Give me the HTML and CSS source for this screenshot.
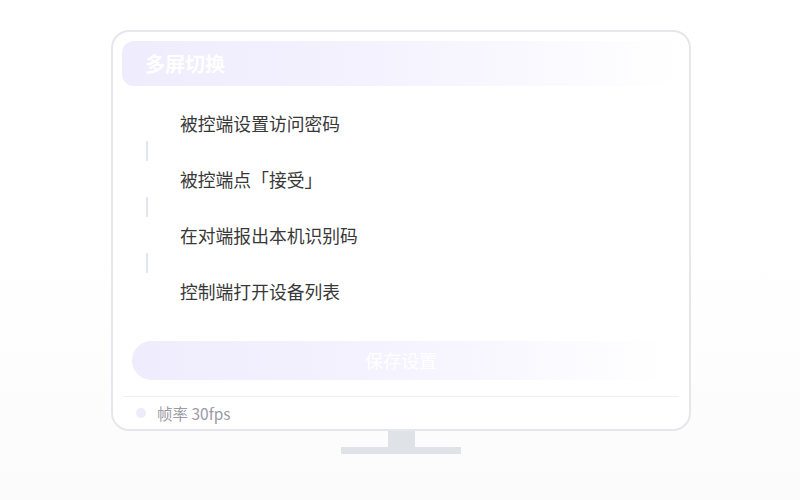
FILE: index.html
```html
<!DOCTYPE html>
<html lang="zh">
<head>
<meta charset="utf-8">
<link rel="stylesheet" href="styles.css">
</head>
<body>
<div class="monitor">
  <div class="screen">
    <div class="title">多屏切换</div>
    <div class="steps">
      <div class="step">被控端设置访问密码</div>
      <div class="connector"><span class="line"></span></div>
      <div class="step">被控端点「接受」</div>
      <div class="connector"><span class="line"></span></div>
      <div class="step">在对端报出本机识别码</div>
      <div class="connector"><span class="line"></span></div>
      <div class="step">控制端打开设备列表</div>
    </div>
    <div class="save">保存设置</div>
    <div class="divider"></div>
    <div class="footer"><span class="dot"></span><span class="fps">帧率 30fps</span></div>
  </div>
  <div class="neck"></div>
  <div class="base"></div>
</div>
</body>
</html>
```
FILE: styles.css
```css
html, body {
  margin: 0;
  padding: 0;
}
body {
  width: 800px;
  height: 500px;
  background: linear-gradient(180deg, #ffffff 0%, #ffffff 50%, #fbfbfc 100%);
  font-family: "Noto Sans CJK SC", "Noto Sans", sans-serif;
  overflow: hidden;
}
.monitor {
  display: flex;
  flex-direction: column;
  align-items: center;
  width: 580px;
  padding-top: 30px;
  margin-left: 111px;
}
.screen {
  box-sizing: border-box;
  width: 580px;
  height: 401px;
  border: 2px solid #e6e7ec;
  border-radius: 18px;
  background: #ffffff;
  display: flex;
  flex-direction: column;
}
.title {
  margin: 9px 9px 0 9px;
  height: 45px;
  border-radius: 12px;
  background: linear-gradient(90deg, #efecfd 0%, #f4f2fe 45%, rgba(255,255,255,0) 100%);
  color: #ffffff;
  font-size: 20px;
  font-weight: 700;
  line-height: 46px;
  padding-left: 23px;
}
.steps {
  margin-top: 23px;
  display: flex;
  flex-direction: column;
}
.step {
  height: 28px;
  line-height: 28px;
  font-size: 17.8px;
  color: #383838;
  padding-left: 67px;
}
.connector {
  height: 28px;
  display: flex;
  align-items: center;
  padding-left: 33px;
}
.line {
  width: 2px;
  height: 20px;
  background: #e4e6ee;
}
.save {
  margin: 36px 19px 0 19px;
  height: 39px;
  border-radius: 20px;
  background: linear-gradient(90deg, #efecfd 0%, #f5f3fe 50%, rgba(255,255,255,0) 100%);
  color: #ffffff;
  font-size: 18px;
  line-height: 39px;
  text-align: center;
}
.divider {
  margin: 16px 10px 0 10px;
  height: 1px;
  background: #eef0f3;
}
.footer {
  height: 32px;
  display: flex;
  align-items: center;
  padding-left: 23px;
}
.dot {
  width: 10px;
  height: 10px;
  border-radius: 50%;
  background: #eeebfc;
  margin-right: 11px;
}
.fps {
  font-size: 15.5px;
  color: #9b9ba6;
}
.neck {
  width: 27px;
  height: 16px;
  background: #dfe3e8;
}
.base {
  width: 120px;
  height: 7px;
  background: #dfe3e8;
}
```
